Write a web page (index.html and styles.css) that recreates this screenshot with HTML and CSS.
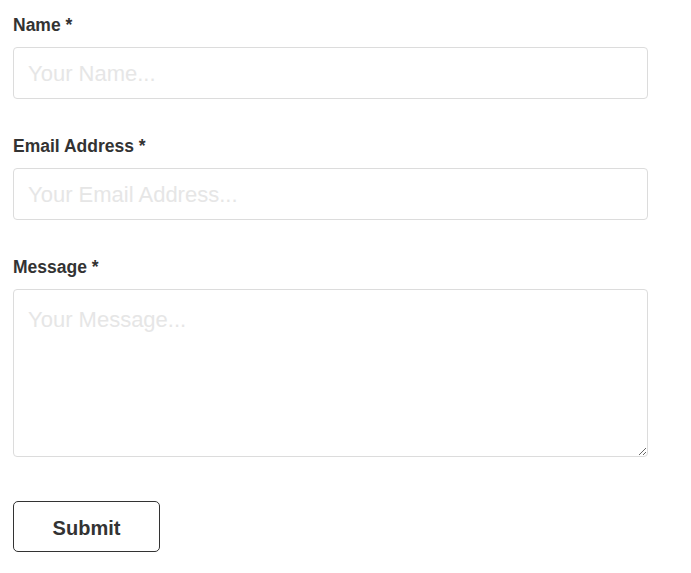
FILE: index.html
```html
<!DOCTYPE html>
<html lang="en">
<head>
<meta charset="utf-8">
<title>Contact Form</title>
<link rel="stylesheet" href="styles.css">
</head>
<body>
<form class="contact-form">
  <div class="field">
    <label class="field-label" for="name">Name *</label>
    <input class="field-input" id="name" type="text" placeholder="Your Name...">
  </div>
  <div class="field">
    <label class="field-label" for="email">Email Address *</label>
    <input class="field-input" id="email" type="email" placeholder="Your Email Address...">
  </div>
  <div class="field">
    <label class="field-label" for="message">Message *</label>
    <textarea class="field-textarea" id="message" placeholder="Your Message..."></textarea>
  </div>
  <button class="submit-btn" type="button">Submit</button>
</form>
</body>
</html>
```

FILE: styles.css
```css
* {
  box-sizing: border-box;
}

html, body {
  margin: 0;
  padding: 0;
  background: #ffffff;
}

body {
  font-family: "Liberation Sans", Arial, Helvetica, sans-serif;
  color: #333333;
}

.contact-form {
  width: 661px;
  padding: 15px 13px 20px 13px;
  display: flex;
  flex-direction: column;
}

.field {
  display: flex;
  flex-direction: column;
  margin-bottom: 37px;
}

.field-label {
  display: block;
  font-size: 17.5px;
  font-weight: bold;
  line-height: 20px;
  margin-bottom: 12px;
  color: #333333;
}

.field-input,
.field-textarea {
  width: 635px;
  font-family: "Liberation Sans", Arial, Helvetica, sans-serif;
  font-size: 22px;
  color: #333333;
  border: 1px solid #dcdcdc;
  border-radius: 4px;
  background: #ffffff;
  outline: none;
  margin: 0;
}

.field-input {
  height: 52px;
  padding: 2px 14px 0 14px;
}

.field-textarea {
  height: 168px;
  padding: 17px 14px 13px 14px;
  line-height: normal;
  resize: vertical;
}

.field-input::placeholder,
.field-textarea::placeholder {
  color: #e6e6e6;
  opacity: 1;
}

.field:last-of-type {
  margin-bottom: 44px;
}

.submit-btn {
  align-self: flex-start;
  width: 147px;
  height: 51px;
  margin: 0;
  padding: 3px 0 0 0;
  font-family: "Liberation Sans", Arial, Helvetica, sans-serif;
  font-size: 20px;
  font-weight: bold;
  color: #333333;
  background: #ffffff;
  border: 1.5px solid #333333;
  border-radius: 5px;
  cursor: pointer;
}
```
